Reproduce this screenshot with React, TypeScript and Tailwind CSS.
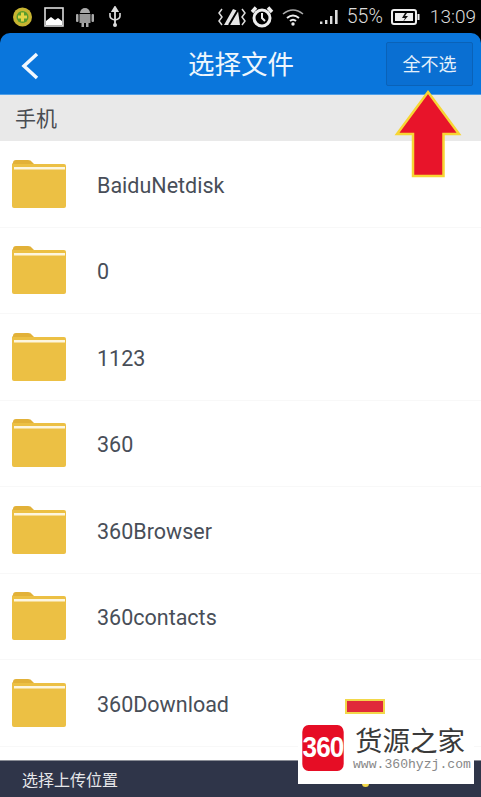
import React from "react";

const rows = ["BaiduNetdisk", "0", "1123", "360", "360Browser", "360contacts", "360Download"];

function Folder() {
  return (
    <svg width="56" height="50" viewBox="0 0 56 50" className="shrink-0">
      <path d="M2 4 Q2 1 5 1 H17 Q20 1 21 3 L23 5 H1 Z" fill="#e2b138" />
      <path d="M1 5 H53 Q55 5 55 7 V47 Q55 49 53 49 H3 Q1 49 1 47 Z" fill="#ecc044" />
      <rect x="3" y="8" width="51" height="2.500" fill="#fdf6df" />
    </svg>
  );
}

function StatusLeft() {
  return (
    <div className="flex items-center">
      <svg width="22" height="20" viewBox="0 0 22 20" className="ml-[12px]">
        <circle cx="10.5" cy="10" r="9.5" fill="#c7b431" />
        <circle cx="10.5" cy="10" r="6" fill="#5a9c2c" />
        <path d="M10.5 5.5v9M6 10h9" stroke="#e4d545" strokeWidth="3" />
      </svg>
      <svg width="22" height="22" viewBox="0 0 22 22" className="ml-[9px]">
        <rect x="2" y="2" width="18" height="18" fill="none" stroke="#ddd" strokeWidth="1.6" />
        <path d="M3 19v-4l5-4 4 3 3-2 4 3v4Z" fill="#fff" />
      </svg>
      <svg width="20" height="22" viewBox="0 0 20 22" className="ml-[10px]">
        <path d="M5 7a5 5 0 0 1 10 0Z" fill="#aaa" />
        <rect x="4.5" y="8" width="11" height="9" fill="#999" />
        <rect x="1" y="8" width="2.5" height="8" rx="1" fill="#aaa" />
        <rect x="16.5" y="8" width="2.5" height="8" rx="1" fill="#aaa" />
        <rect x="6.5" y="17" width="2.5" height="4" fill="#aaa" />
        <rect x="11" y="17" width="2.5" height="4" fill="#aaa" />
      </svg>
      <svg width="16" height="22" viewBox="0 0 16 22" className="ml-[12px]">
        <path d="M8 1 5.5 5h5ZM8 4v16" stroke="#ddd" strokeWidth="1.8" fill="#ddd" />
        <path d="M3 7v3q0 3 5 4 5-1 5-4V7" stroke="#ddd" strokeWidth="1.6" fill="none" />
        <circle cx="8" cy="19" r="2" fill="#ddd" />
      </svg>
    </div>
  );
}

function StatusRight() {
  return (
    <div className="flex items-center text-[#dcdcdc] text-[19.5px] font-['Roboto','Noto_Sans_CJK_SC',sans-serif]">
      <svg width="33" height="24" viewBox="0 0 33 24">
        <path d="M4 4 L1 8 L4 12 L1 16 L4 20" stroke="#ddd" strokeWidth="1.5" fill="none" />
        <path d="M24 4 L27 8 L24 12 L27 16 L24 20" stroke="#ddd" strokeWidth="1.5" fill="none" />
        <path d="M6 20 L15 4 L20 6 L22 20 Z" fill="#e6e6e6" />
        <path d="M11 20 L21 3" stroke="#000" strokeWidth="2" />
      </svg>
      <svg width="24" height="24" viewBox="0 0 24 24" className="ml-[-1px]">
        <circle cx="12" cy="13" r="8" fill="none" stroke="#eee" strokeWidth="3" />
        <path d="M12 8v5l3 3" stroke="#eee" strokeWidth="2" fill="none" />
        <path d="M2 7 6 2.5M22 7 18 2.5" stroke="#eee" strokeWidth="3.4" />
      </svg>
      <svg width="24" height="20" viewBox="0 0 24 20" className="ml-[7px]">
        <path d="M2 7q10-8 20 0" stroke="#aaa" strokeWidth="1.6" fill="none" />
        <path d="M6 11q6-5 12 0" stroke="#eee" strokeWidth="2" fill="none" />
        <path d="M9 14q3-2.6 6 0" stroke="#eee" strokeWidth="2" fill="none" />
        <circle cx="12" cy="17" r="1.7" fill="#eee" />
      </svg>
      <svg width="20" height="16" viewBox="0 0 20 16" className="ml-[15px]">
        <rect x="0" y="12.5" width="2.4" height="2.5" fill="#ddd" />
        <rect x="5" y="11" width="2.4" height="4" fill="#ddd" />
        <rect x="10" y="7" width="2.4" height="8" fill="#ddd" />
        <rect x="15" y="1" width="2.6" height="14" fill="#ddd" />
      </svg>
      <span className="ml-[7px] font-light">55%</span>
      <svg width="30" height="18" viewBox="0 0 30 18" className="ml-[8px]">
        <rect x="1" y="2" width="24" height="14" rx="2" fill="none" stroke="#eee" strokeWidth="2" />
        <rect x="4" y="5" width="18" height="8" fill="#eee" />
        <path d="M14 5l-3 5h3l-2 4 5-6h-3l2-3Z" fill="#111" />
        <rect x="26.5" y="6" width="2" height="6" fill="#eee" />
      </svg>
      <span className="ml-[9px] mr-[5px] text-[19px] font-light">13:09</span>
    </div>
  );
}

export default function App() {
  return (
    <div className="relative w-[481px] h-[797px] overflow-hidden bg-black flex flex-col font-['Roboto','Noto_Sans_CJK_SC',sans-serif]">
      <div className="h-[33px] shrink-0 flex items-center justify-between pt-[1px]">
        <StatusLeft />
        <StatusRight />
      </div>

      <div className="h-[62px] shrink-0 bg-[#0a76dc] rounded-t-[10px] border-b border-[#4f9fe8] flex items-center justify-between pl-[20px] pr-[8px] relative">
        <svg width="20" height="30" viewBox="0 0 20 30" className="mt-[4px]">
          <path d="M17 3 L4 15 L17 27" stroke="#f2f8fe" strokeWidth="3.500" fill="none" />
        </svg>
        <span className="absolute left-[188px] top-[14px] text-[26.5px] leading-[36px] text-[#eef6fd]">选择文件</span>
        <div className="w-[87px] h-[44px] mt-[1px] flex items-center justify-center bg-[#0a6fd2] border border-[#0a62b8] rounded-[2px] text-[18px] text-[#e4f0fb]">全不选</div>
      </div>

      <div className="h-[46px] shrink-0 bg-[#e9e9e9] flex items-center pl-[15px] pt-[3px] text-[21px] text-[#4a4d52]">手机</div>

      <div className="flex-1 bg-white overflow-hidden">
        {rows.map((name) => (
          <div key={name} className="h-[86.5px] flex items-center pl-[11px] border-b border-[#f8f8f8]">
            <Folder />
            <span className="ml-[30px] pt-[4px] text-[21.5px] text-[#484e58]">{name}</span>
          </div>
        ))}
      </div>

      <div className="h-[37px] shrink-0 bg-[#2f3549] border-t border-[#8a8d96] flex items-center pl-[22px] pt-[3px] text-[16px] text-[#e6e7ea]">选择上传位置</div>

      <svg className="absolute left-[390px] top-[88px]" width="76" height="94" viewBox="0 0 76 94">
        <path d="M38 4 L69 46 L53.500 46 L53.500 88 L23 88 L23 46 L7 46 Z" fill="#e8142a" stroke="#f7d634" strokeWidth="2.500" />
      </svg>
      <div className="absolute left-[345px] top-[699px] w-[40px] h-[15px] bg-[#e02a3a] border-2 border-[#f2d84a]" />
      <div className="absolute left-[362px] top-[783px] w-[7px] h-[4px] rounded-b-full bg-[#f2d84a]" />

      <div className="absolute left-[298px] top-[722px] w-[176px] h-[62px] bg-white flex items-start pt-[3px] pl-[2px]">
        <div className="w-[46px] h-[46px] rounded-[7px] bg-[#e60d25] flex items-center justify-center text-white font-['Liberation_Sans',sans-serif] font-bold text-[29px] tracking-[-1px] scale-x-90">360</div>
        <div className="ml-[9px] -mt-[1px] flex flex-col">
          <span className="h-[31px] text-[27.5px] leading-[31px] text-[#3a3a3a] font-['Noto_Sans_CJK_SC',sans-serif]">货源之家</span>
          <span className="-ml-[2px] mt-[2px] text-[13.1px] leading-[15px] text-[#888] whitespace-nowrap font-['Liberation_Mono',monospace]">www.360hyzj.com</span>
        </div>
      </div>
    </div>
  );
}
